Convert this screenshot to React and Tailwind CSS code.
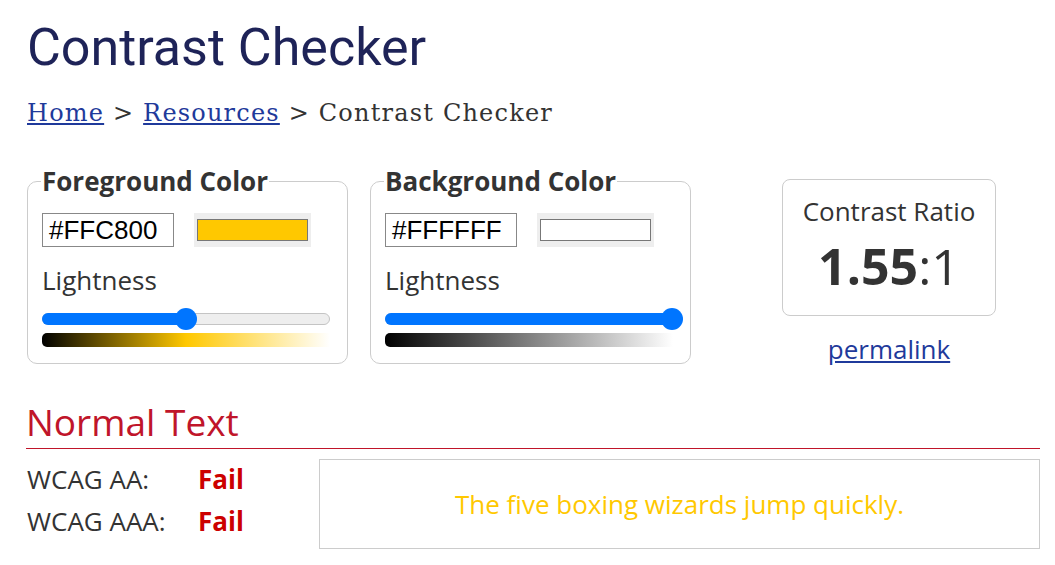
import React from "react";

function ColorField({ label, hex, swatch, pos, gradient }) {
  return (
    <fieldset className="w-[321px] h-[198px] border border-[#cccccc] rounded-[10px] px-[14px]">
      <legend className="px-[1px] -ml-px font-['Open_Sans',sans-serif] font-bold text-[26px] leading-[30px] text-[#333333]">
        {label}
      </legend>

      <div className="flex items-center mt-[17px]">
        <div className="w-[132px] h-[34px] border border-[#888888] flex items-center px-[6px] font-['Liberation_Sans',sans-serif] text-[26px] text-black">
          {hex}
        </div>
        <div className="ml-[20px] w-[117px] h-[34px] bg-[#eeeeee] flex items-center justify-center">
          <div
            className="w-[111px] h-[22px] border border-[#777777]"
            style={{ backgroundColor: swatch }}
          />
        </div>
      </div>

      <div className="mt-[16px] font-['Open_Sans',sans-serif] text-[26px] leading-[34px] text-[#333333]">
        Lightness
      </div>

      <div className="relative mt-[16px] w-[288px] h-[12px] rounded-full bg-[#eeeeee] border border-[#c4c4c4]">
        <div
          className="absolute -left-px -top-px h-[12px] rounded-full bg-[#0075ff]"
          style={{ width: `calc(${pos}% + 2px)` }}
        />
        <div
          className="absolute -top-[6px] w-[22px] h-[22px] rounded-full bg-[#0075ff]"
          style={{ left: `calc(${pos}% - 11px)` }}
        />
      </div>

      <div
        className="mt-[8px] w-[288px] h-[14px] rounded-l-[5px]"
        style={{ background: gradient }}
      />
    </fieldset>
  );
}

export default function App() {
  return (
    <div className="bg-white min-h-[565px] pl-[27px] pr-[15px] pt-[18px] font-['Open_Sans',sans-serif] text-[#333333]">
      <h1 className="font-['Roboto',sans-serif] text-[52px] leading-[60px] text-[#1e2358]">
        Contrast Checker
      </h1>

      <div className="mt-[20px] font-['DejaVu_Serif',serif] text-[24px] leading-[30px] tracking-[1.2px] text-[#333333]">
        <a href="#" className="text-[#1f3a9b] underline">Home</a>
        {" > "}
        <a href="#" className="text-[#1f3a9b] underline">Resources</a>
        {" > Contrast Checker"}
      </div>

      {/* colour pickers + ratio */}
      <div className="flex items-start mt-[38px]">
        <ColorField
          label="Foreground Color"
          hex="#FFC800"
          swatch="#FFC800"
          pos={50}
          gradient="linear-gradient(to right, #000000, #ffc800 50%, #ffffff)"
        />
        <div className="ml-[22px]">
          <ColorField
            label="Background Color"
            hex="#FFFFFF"
            swatch="#FFFFFF"
            pos={100}
            gradient="linear-gradient(to right, #000000, #ffffff)"
          />
        </div>

        <div className="ml-[91px] mt-[13px] flex flex-col items-center">
          <div className="w-[214px] h-[137px] border border-[#cccccc] rounded-[8px] flex flex-col items-center pt-[15px]">
            <div className="text-[26px] leading-[32px] text-[#333333]">Contrast Ratio</div>
            <div className="mt-[11px] text-[50px] leading-[56px] text-[#333333]">
              <span className="font-bold">1.55</span>
              <span>:1</span>
            </div>
          </div>
          <a href="#" className="mt-[17px] text-[26px] leading-[32px] text-[#1f3a9b] underline">
            permalink
          </a>
        </div>
      </div>

      {/* normal text */}
      <h2 className="mt-[35px] -ml-px text-[37px] leading-[44px] text-[#c0152a] border-b border-[#c0152a] pb-[4px] w-[1014px]">
        Normal Text
      </h2>

      <div className="flex items-start mt-[9px]">
        <div className="w-[292px] text-[26px] leading-[42px]">
          <div className="flex">
            <span className="w-[171px]">WCAG AA:</span>
            <span className="font-bold text-[#cc0000]">Fail</span>
          </div>
          <div className="flex">
            <span className="w-[171px]">WCAG AAA:</span>
            <span className="font-bold text-[#cc0000]">Fail</span>
          </div>
        </div>
        <div className="mt-[1px] w-[721px] h-[90px] border border-[#cccccc] flex items-center justify-center text-[26px] text-[#ffc800]">
          The five boxing wizards jump quickly.
        </div>
      </div>
    </div>
  );
}
